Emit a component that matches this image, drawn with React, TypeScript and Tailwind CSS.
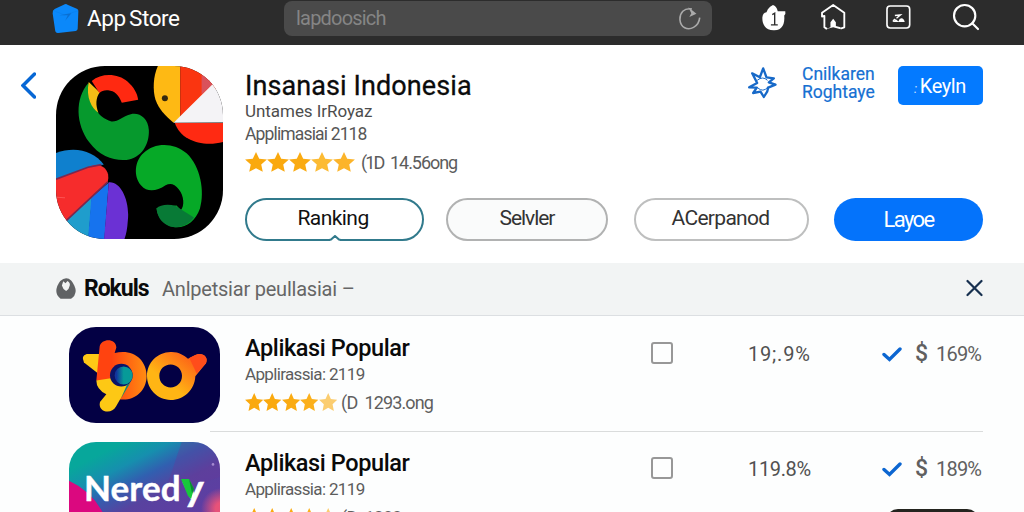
import { Search } from "lucide-react";

const STAR = "M12 0l3.5 7.6 8.4.9-6.2 5.7 1.7 8.5-7.4-4.2-7.4 4.2 1.7-8.5L.1 8.5l8.4-.9z";

interface AppRow { title: string; meta: string; rating: string; change: string; price: string; art: "bo" | "neredy" }

const rows: AppRow[] = [
  { title: "Aplikasi Popular", meta: "Applirassia: 2119", rating: "1293.ong", change: "19;.9%", price: "169%", art: "bo" },
  { title: "Aplikasi Popular", meta: "Applirassia: 2119", rating: "1283.ong", change: "119.8%", price: "189%", art: "neredy" },
];

function Stars({ className, last }: { className: string; last: string[] }) {
  return (
    <div className={`flex ${className}`}>
      {["#faa90e", "#faa90e", "#faab12", ...last].map((fill, i) => (
        <svg key={i} viewBox="0 0 24 24" preserveAspectRatio="none" className="h-full min-w-0 flex-1">
          <path d={STAR} fill={fill} />
        </svg>
      ))}
    </div>
  );
}

function StoreLogo() {
  return (
    <svg viewBox="155 10 82 92" className="h-[31px] w-[27px] flex-none">
      <path d="M163 27L194 13Q198 11 202 14L232 27Q236 30 235 35L233 88Q232 93 227 94L174 100Q167 101 165 95L157 41Q156 31 163 27Z" fill="#0b88fa" />
      <path d="M160 32L192 45L234 33" fill="none" stroke="#0880ee" strokeWidth="2" />
      <path d="M177 46L214 40L195 63L203 46Z" fill="#0a6fd2" />
    </svg>
  );
}

function HeroArt() {
  return (
    <svg viewBox="169 47 500 521" preserveAspectRatio="none" className="h-full w-full">
      <rect x="169" y="47" width="500" height="521" fill="#000" />
      {/* upper hook */}
      <path d="M266 98C225 145 228 222 268 276C300 320 342 333 380 330C425 325 449 283 447 240C445 204 419 186 393 192C371 197 353 216 335 214C312 207 296 194 290 178Z" fill="#06992d" />
      <path d="M267 95L300 127C288 143 287 165 296 188C276 174 258 142 267 95Z" fill="#f4bd16" />
      <path d="M276 92C306 67 355 69 383 94C402 111 413 130 415 149L366 158C357 133 344 122 325 120C313 119 306 122 299 128Z" fill="#ff2911" />
      {/* bird */}
      <path d="M474 47H541V201L521 218C492 193 478 178 467 149C458 120 460 77 474 47Z" fill="#feb914" />
      <path d="M541 47H669V101L541 201Z" fill="#fa3510" />
      <path d="M605 47H669V80L639 101L605 133Z" fill="#d9525b" />
      <path d="M521 218L640 100L669 70V217Z" fill="#f4f3f6" />
      <path d="M525 219H669V276C611 292 542 273 525 219Z" fill="#ff2a12" />
      <circle cx="495" cy="144" r="9" fill="#34290f" />
      {/* lower hook */}
      <path d="M432 308C464 277 522 276 560 310C602 350 615 425 600 476C584 523 543 543 506 527C486 517 472 498 470 475L530 467Q541 478 542 482C555 469 552 438 537 419C523 400 510 400 497 406C470 425 442 428 424 407C400 379 404 332 432 308Z" fill="#06a927" />
      <path d="M470 476C480 464 506 462 526 468L582 503C562 532 522 542 495 522C479 511 472 494 470 476Z" fill="#087a36" />
      {/* fan */}
      <path d="M169 309C227 287 282 303 312 344L169 389Z" fill="#0f80ce" />
      <path d="M169 388L265 351C296 340 318 348 325 374Q327 387 324 395L198 515L169 490Z" fill="#f62c2c" />
      <path d="M198 514L277 441L266 568H169Z" fill="#1f9dcc" />
      <path d="M275 442L327 398L314 568H265Z" fill="#1673ee" />
      <path d="M327 397C363 393 391 453 384 513Q382 547 374 568H313Z" fill="#6b31d4" />
      <path d="M169 388L265 352L305 344M198 514L324 396" fill="none" stroke="#7c284f" strokeWidth="5" />
      <path d="M169 442L196 444" stroke="#f66" strokeWidth="2" />
    </svg>
  );
}

function BoArt() {
  return (
    <svg viewBox="87 51 453 287" preserveAspectRatio="none" className="h-full w-full">
      <defs>
        <linearGradient id="bo-b" x1="0" x2="1"><stop offset="0.3" stopColor="#ff4310" /><stop offset="1" stopColor="#ff8d12" /></linearGradient>
        <linearGradient id="bo-o" x1="0" y1="1" x2="1" y2="0"><stop offset="0.35" stopColor="#ffb514" /><stop offset="0.8" stopColor="#fd6517" /></linearGradient>
        <linearGradient id="bo-eye"><stop offset="0.1" stopColor="#12359c" /><stop offset="0.5" stopColor="#079a98" /></linearGradient>
      </defs>
      <rect x="87" y="51" width="453" height="287" fill="#030044" />
      <path d="M140 132H182V196L132 157Q122 137 140 132Z" fill="#fec816" />
      <path d="M169 211L179 109C184 84 228 83 229 112L224 129C279 115 320 149 320 198C319 247 277 275 235 266L203 220Z" fill="url(#bo-b)" />
      <path d="M169 211L222 203Q244 222 267 221L228 289C214 315 172 305 180 275L199 252Q169 238 169 211Z" fill="#fdc815" />
      <circle cx="244" cy="195" r="34" fill="#0b1468" />
      <circle cx="251" cy="196" r="27" fill="url(#bo-eye)" />
      <path d="M260 226L272 216L243 265Z" fill="#118578" />
      <path fillRule="evenodd" d="M392 126C416 125 432 136 444 146L466 135C485 125 507 139 498 159L466 198C464 239 432 269 392 269C352 269 321 237 321 197C321 158 352 127 392 126ZM392 163C372 163 358 178 358 197C358 217 373 232 392 232C411 232 426 217 426 197C426 178 411 163 392 163Z" fill="url(#bo-o)" />
      <path d="M448 144L466 135C485 125 507 139 498 159L470 190Z" fill="#ff4d1b" />
    </svg>
  );
}

function NeredyArt() {
  return (
    <div className="relative h-full w-full bg-[linear-gradient(153deg,#07a79b_16%,#168fae_30%,#315fb0_42%,#58429f_56%,#6638a6_100%)]">
      <svg viewBox="87 396 453 287" preserveAspectRatio="none" className="h-full w-full">
        <path d="M87 512Q155 543 190 610V683H87Z" fill="#db087f" />
        <defs>
          <radialGradient id="nr-glow"><stop offset="0.3" stopColor="#e75279" /><stop offset="1" stopColor="#e75279" stopOpacity="0" /></radialGradient>
        </defs>
        <circle cx="545" cy="595" r="62" fill="url(#nr-glow)" />
        <path d="M425 396H540V500L370 560Z" fill="#673a99" opacity="0.35" />
        <circle cx="519" cy="463" r="4" fill="#a58ad0" />
      </svg>
      <div className="absolute top-[24px] left-[15px] flex font-['Lato',sans-serif] text-[35px] leading-[42px] font-bold text-white">
        <span className="tracking-[0.1px] [-webkit-text-stroke:0.4px_#fff]">Nered</span>
        <span className="ml-[2px] w-[22px] origin-left scale-x-110 text-[36px] [-webkit-text-stroke:0.6px_#fff]">y</span>
      </div>
      {/* green left arm of the y */}
      <svg viewBox="0 0 18 24" className="absolute top-[36px] left-[112px] h-[24px] w-[18px]">
        <path d="M0 1H8L13 11L10 21L7 18Z" fill="#18c83b" />
        <path d="M8 1L13 11L11 15Z" fill="#0a8a35" />
      </svg>
    </div>
  );
}

function ListRow({ row }: { row: AppRow }) {
  return (
    <div className="flex h-[115px] flex-none pl-[69px]">
      <div className="mt-[11px] h-[96px] w-[151px] flex-none overflow-hidden rounded-[27px]">
        {row.art === "bo" ? <BoArt /> : <NeredyArt />}
      </div>
      <div className="ml-[25px] w-[406px] pt-[18px]">
        <h3 className="text-[23.5px] leading-[28px] font-medium tracking-[-0.4px] text-[#0a0a0a]">{row.title}</h3>
        <p className="mt-px text-[17px] leading-[22px] tracking-[-0.65px] text-[#5c5c5c]">{row.meta}</p>
        <div className="mt-[5px] flex items-center">
          <Stars className="h-[19px] w-[92px]" last={["#fbb01c", "#fbcd70"]} />
          <span className="mt-[2px] ml-[4px] text-[18px] leading-[22px] tracking-[-0.7px] text-[#5f5f5f]">(D</span>
          <span className="mt-[2px] ml-[7px] text-[18px] leading-[22px] tracking-[-0.9px] text-[#5f5f5f]">{row.rating}</span>
        </div>
      </div>
      <div className="mt-[26px] h-[22px] w-[22px] flex-none rounded-[3px] border-2 border-[#989898]" />
      <span className={`mt-[26px] ml-[75px] w-[134px] text-[20px] leading-[24px] text-[#515151] ${row.art === "bo" ? "tracking-[0.8px]" : "tracking-[-0.35px]"}`}>{row.change}</span>
      <svg viewBox="0 0 20 15" className="mt-[31px] h-[15px] w-[20px] flex-none">
        <path d="M2 7.5L7.5 12.5L18 2" fill="none" stroke="#0c66d1" strokeWidth="3.4" strokeLinecap="round" />
      </svg>
      <span className="mt-[25px] ml-[13px] w-[21px] text-[23px] leading-[26px] font-medium text-[#606060]">$</span>
      <span className="mt-[26px] text-[20px] leading-[24px] tracking-[-0.8px] text-[#606060]">{row.price}</span>
    </div>
  );
}

export default function App() {
  return (
    <div className="relative flex h-[512px] w-[1024px] flex-col overflow-hidden bg-[#fdfefe] font-['Roboto',sans-serif] whitespace-nowrap">
      <header className="flex h-[45px] flex-none items-start bg-[#2c2c2c] pl-[52px]">
        <div className="mt-[3px]"><StoreLogo /></div>
        <span className="mt-[4px] ml-[8px] w-[197px] text-[22.5px] leading-[28px] tracking-[-0.4px] text-white [word-spacing:-2px]">App Store</span>
        <div className="mt-px flex h-[35px] w-[428px] flex-none items-center justify-between rounded-lg bg-[#4a4a4a] pr-[11px] pl-[12px]">
          <span className="-mt-px text-[20px] tracking-[-0.8px] text-[#858585]">lapdoosich</span>
          <svg viewBox="117 18 68 71" className="h-[23px] w-[22px]">
            <path d="M157 24C132 20 119 36 120 58C122 81 143 91 162 81Q179 72 181 51" fill="none" stroke="#aaa" strokeWidth="5" />
            <path d="M146 19L171 39L149 49L155 37Z" fill="#aaa" />
          </svg>
        </div>
        {/* toolbar */}
        <svg viewBox="365 13 70 79" className="mt-[4px] ml-[50px] h-[27px] w-[24px] flex-none">
          <path d="M382 28Q388 20 397 16Q407 18 411 34L433 34Q435 42 430 47C432 73 424 91 399 90C374 90 365 72 366 52Q367 39 378 37Z" fill="#fff" />
          <path d="M395 44L402 40V74M391 74H411" fill="none" stroke="#2c2c2c" strokeWidth="4" />
        </svg>
        <svg viewBox="542 11 74 80" className="mt-[4px] ml-[35px] h-[27px] w-[25px] flex-none" fill="none" stroke="#fff" strokeWidth="5.5">
          <path d="M558 84L552 80V46L545 48V37L578 14L611 37V80L602 83" strokeLinejoin="round" strokeLinecap="round" />
          <path d="M556 86L570 80V65L578 55L586 65V76L600 80V86L578 80Z" fill="#fff" stroke="none" />
        </svg>
        <svg viewBox="736 14 76 76" className="mt-[5px] ml-[40px] h-[25px] w-[25px] flex-none">
          <rect x="739" y="17" width="69" height="67" rx="10" fill="none" stroke="#fff" strokeWidth="5" />
          <path d="M763 46L780 44L768 54M757 62L764 57" fill="none" stroke="#fff" strokeWidth="4" />
          <path d="M774 64Q777 53 785 54Q792 57 793 66H755L766 57Z" fill="#fff" />
        </svg>
        <Search className="mt-px ml-[39px] h-[32px] w-[32px] flex-none text-white" strokeWidth={1.6} />
      </header>

      {/* Hero */}
      <section className="flex h-[218px] flex-none bg-white pl-[21px]">
        <svg viewBox="0 0 15 27" className="mt-[27px] h-[27px] w-[15px] flex-none">
          <path d="M13.5 2L2 13.5L13.5 25" fill="none" stroke="#0767d5" strokeWidth="3.5" strokeLinecap="round" />
        </svg>
        <div className="mt-[21px] ml-[20px] h-[173px] w-[167px] flex-none overflow-hidden rounded-[49px]">
          <HeroArt />
        </div>
        <div className="ml-[22px] w-[738px] pt-[21px]">
          <div className="flex h-[132px] justify-between">
            <div>
              <h1 className="pt-[2px] text-[27px] leading-[36px] tracking-[0.1px] text-[#0b0b0b] [-webkit-text-stroke:0.3px_#0b0b0b]">Insanasi Indonesia</h1>
              <p className="-mt-[3px] text-[17px] leading-[20px] tracking-[-0.05px] text-[#4d4d4d]">Untames IrRoyaz</p>
              <p className="mt-[2px] text-[17.5px] leading-[22px] tracking-[-0.85px] text-[#575757]">Applimasiai 2118</p>
              <div className="mt-[6px] flex items-center">
                <Stars className="h-[21px] w-[110px]" last={["#fcbb34", "#fcb42a"]} />
                <span className="mt-px ml-[6px] w-[29px] text-[18px] leading-[22px] tracking-[-1.9px] text-[#5c5c5c]">(1D</span>
                <span className="mt-px text-[18px] leading-[22px] tracking-[-1.05px] text-[#5c5c5c]">14.56ong</span>
              </div>
            </div>
            <div className="flex">
              <svg viewBox="325 202 86 96" className="mt-px h-[32px] w-[29px] flex-none" fill="none" stroke="#1769c8" strokeWidth="7" strokeLinejoin="round">
                <path d="M370 206L380 233L402 236L387 248L407 255L385 264L382 276L372 292L362 276L340 280L351 264L328 263L352 250L337 221L360 233Z" />
                <path d="M352 242Q369 228 383 242M353 264Q370 280 384 262" strokeWidth="3" />
              </svg>
              <p className="-mt-px ml-[25px] w-[96px] text-[17.5px] leading-[18px] text-[#1670d2] [-webkit-text-stroke:0.2px_#1670d2]">Cnilkaren<br />Roghtaye</p>
              <button className="h-[39px] w-[85px] rounded-[5px] bg-[#047aff] pr-px text-[20px] tracking-[-0.4px] text-white"><span className="mr-[3px] text-[13px] italic opacity-80">:</span>Keyln</button>
            </div>
          </div>
          <div className="flex h-[43px] text-[21px] text-[#333]">
            <button className="relative w-[179px] rounded-full border-2 border-[#317a8c] pr-[3px] pb-px tracking-[-0.55px] text-[#111]">
              Ranking
              <svg viewBox="0 0 12 6" className="absolute -bottom-[2px] left-[82px] h-[6px] w-[12px]">
                <path d="M1 4.5L6 0.5L11 4.5V6H1Z" fill="#fff" />
                <path d="M0 5L2 4.5L6 1L10 4.5L12 5" fill="none" stroke="#317a8c" strokeWidth="2" />
              </svg>
            </button>
            <button className="ml-[22px] w-[162px] rounded-full border-2 border-[#b1b2b2] bg-[#fafbfb] pb-px tracking-[-1.05px]">Selvler</button>
            <button className="ml-[26px] w-[175px] rounded-full border-2 border-[#bebfbf] pr-[2px] pb-px tracking-[-0.7px]">ACerpanod</button>
            <button className="ml-[25px] w-[149px] rounded-full bg-[#0473fb] pb-px text-[22px] tracking-[-1.6px] text-white">Layoe</button>
          </div>
        </div>
      </section>

      <section className="flex h-[53px] flex-none items-center border-b border-[#dcdfe2] bg-[#f2f4f4] pr-[41px] pl-[56px]">
        <svg viewBox="167 68 61 64" className="-mt-px h-[21px] w-[20px] flex-none">
          <path d="M180 77Q198 61 214 76Q227 93 227 108Q226 124 213 131H181Q168 123 168 108Q168 92 180 77Z" fill="#606264" />
          <path d="M189 78L196 84L202 77Q211 82 209 91Q207 103 198 108Q187 101 185 91Z" fill="#f2f4f4" />
        </svg>
        <span className="ml-[8px] w-[78px] text-[23px] font-bold tracking-[-1.05px] text-[#0a0a0a]">Rokuls</span>
        <span className="-mt-px flex-1 text-[20px] tracking-[-0.22px] text-[#666]">Anlpetsiar peullasiai –</span>
        <svg viewBox="0 0 17 18" className="-mt-[2px] h-[18px] w-[17px]">
          <path d="M1.5 2L15.5 16M15.5 2L1.5 16" stroke="#17304f" strokeWidth="2.2" strokeLinecap="round" />
        </svg>
      </section>

      <ListRow row={rows[0]} />
      <hr className="mr-[41px] ml-[210px] h-px flex-none border-0 bg-[#dadcdc]" />
      <div className="-mt-px"><ListRow row={rows[1]} /></div>

      <div className="absolute top-[509px] left-[886px] h-[20px] w-[93px] rounded-t-[12px] bg-[#24241f]" />
    </div>
  );
}
